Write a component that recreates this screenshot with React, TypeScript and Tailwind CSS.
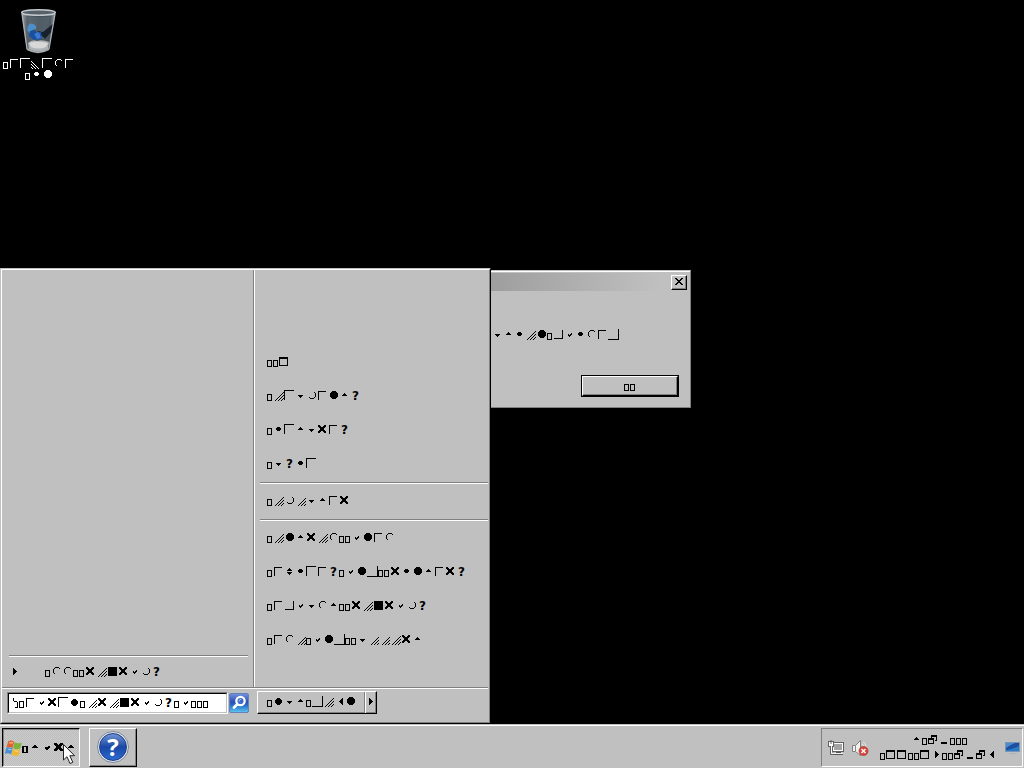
import type { ReactNode } from "react";

/* Symbol-font shapes on an 11x12 pixel grid, keyed by character. */
const SHAPES: Record<string, ReactNode> = {
  "0": <path d="M2 9h6v2h-6z" />,
  "1": <path fillRule="evenodd" d="M0 2h9v9h-9zM1 4v6h7v-6z" />,
  "2": (
    <>
      <path fillRule="evenodd" d="M0 5h6v6h-6zM1 7v3h4v-3z" />
      <path d="M3 2h6v6h-2v-1h1v-3h-4v1h-1z" />
    </>
  ),
  "3": <path d="M6 3h1v7h-1zM5 4h1v5h-1zM4 5h1v3h-1zM3 6h1v1h-1z" />,
  "4": <path d="M4 3h1v7h-1zM5 4h1v5h-1zM6 5h1v3h-1zM7 6h1v1h-1z" />,
  "5": <path d="M5 4h1v1h-1zM4 5h3v1h-3zM3 6h5v1h-5z" />,
  t: <path d="M5 4h1v1h-1zM4 5h3v1h-3zM3 6h5v1h-5z" />,
  u: <path d="M3 6h5v1h-5zM4 7h3v1h-3zM5 8h1v1h-1z" />,
  v: <path d="M5 3h1v1h-1zM4 4h3v1h-3zM3 5h5v1h-5zM3 7h5v1h-5zM4 8h3v1h-3zM5 9h1v1h-1z" />,
  w: <path d="M8 3h1v7h-1zM7 4h1v5h-1zM6 5h1v3h-1zM5 6h1v1h-1z" />,
  a: <path d="M7 5h1v1h-1zM4 6h1v1h-1zM6 6h2v1h-2zM4 7h3v1h-3zM5 8h1v1h-1z" />,
  c: <path d="M0 1h10v1h-9v9h-1z" />,
  e: <path d="M1 2h8v1h-7v8h-1z" />,
  d: <path d="M10 1h1v11h-11v-1h10z" />,
  f: <path d="M9 2h1v9h-9v-1h8z" />,
  g: <path d="M1 2h9v9h-9z" />,
  h: <path d="M4 3h3v1h1v1h1v3h-1v1h-1v1h-3v-1h-1v-1h-1v-3h1v-1h1z" />,
  i: <path d="M4 4h3v1h1v2h-1v1h-3v-1h-1v-2h1z" />,
  n: <path d="M4 2h4v1h1v1h1v4h-1v1h-1v1h-4v-1h-1v-1h-1v-4h1v-1h1z" />,
  l: <path d="M4 2h4v1h1v1h-1v-1h-4zM3 3h1v1h-1zM2 4h1v4h-1zM3 8h1v1h-1z" />,
  m: <path d="M8 3h1v1h-1zM9 4h1v4h-1zM8 8h1v1h-1zM4 9h4v1h-4zM3 8h1v1h-1z" />,
  r: (
    <path d="M1 2h2v1h-2zM7 2h2v1h-2zM1 3h3v1h-3zM6 3h3v1h-3zM2 4h6v1h-6zM3 5h4v2h-4zM2 7h6v1h-6zM1 8h3v1h-3zM6 8h3v1h-3zM1 9h2v1h-2zM7 9h2v1h-2z" />
  ),
  o: (
    <path d="M2 11h1v1h-1zM3 10h1v1h-1zM4 9h1v1h-1zM5 8h1v1h-1zM6 7h1v1h-1zM7 6h1v1h-1zM8 5h1v1h-1zM9 4h1v1h-1zM10 3h1v1h-1zM5 11h1v1h-1zM6 10h1v1h-1zM7 9h1v1h-1zM8 8h1v1h-1zM9 7h1v1h-1zM10 6h1v1h-1zM8 11h1v1h-1zM9 10h1v1h-1zM10 9h1v1h-1z" />
  ),
  p: (
    <path d="M3 11h1v1h-1zM4 10h1v1h-1zM5 9h1v1h-1zM6 8h1v1h-1zM7 7h1v1h-1zM8 6h1v1h-1zM9 5h1v1h-1zM10 4h1v1h-1zM6 11h1v1h-1zM7 10h1v1h-1zM8 9h1v1h-1zM9 8h1v1h-1zM10 7h1v1h-1zM9 11h1v1h-1zM10 10h1v1h-1z" />
  ),
  y: (
    <path d="M0 4h1v1h-1zM1 5h1v1h-1zM2 6h1v1h-1zM3 7h1v1h-1zM4 8h1v1h-1zM5 9h1v1h-1zM6 10h1v1h-1zM7 11h1v1h-1zM0 7h1v1h-1zM1 8h1v1h-1zM2 9h1v1h-1zM3 10h1v1h-1zM4 11h1v1h-1zM0 10h1v1h-1zM1 11h1v1h-1z" />
  ),
  "|": <path d="M0 2h1v3h-1zM1 5h3v1h1v6h-3v-1h2v-5h-3z" />,
};

function Glyphs({ text, bold = false }: { text: string; bold?: boolean }) {
  return (
    <span className="flex h-3 shrink-0">
      {[...text].map((ch, i) => {
        if (ch === "s")
          return (
            <span
              key={i}
              className="w-[11px] shrink-0 text-center font-['DejaVu_Sans',sans-serif] text-[12px] leading-[14px] font-bold"
            >
              ?
            </span>
          );
        const wide = ch !== "|" && ch in SHAPES;
        const w = (wide ? 11 : 6) + (bold ? 1 : 0);
        const shape = SHAPES[ch] ?? <path fillRule="evenodd" d="M0 5h5v7h-5zM1 6v5h3v-5z" />;
        return (
          <svg
            key={i}
            width={w}
            height="12"
            viewBox={`0 0 ${w} 12`}
            fill="currentColor"
            shapeRendering="crispEdges"
            className="shrink-0 overflow-visible"
          >
            {shape}
            {bold && <g transform="translate(1 0)">{shape}</g>}
          </svg>
        );
      })}
    </span>
  );
}

function MenuRow({ text }: { text: string }) {
  return (
    <div className="flex h-[34px] pt-[10px] pl-[12px]">
      <Glyphs text={text} />
    </div>
  );
}

function Separator({ className = "" }: { className?: string }) {
  return (
    <div className={className}>
      <div className="h-px bg-[#808080]" />
      <div className="h-px bg-white" />
    </div>
  );
}

function RightArrow() {
  return (
    <svg width="4" height="7" viewBox="0 0 4 7" shapeRendering="crispEdges">
      <path d="M0 0h1v7h-1zM1 1h1v5h-1zM2 2h1v3h-1zM3 3h1v1h-1z" />
    </svg>
  );
}

function RecycleBin() {
  return (
    <svg width="38" height="46" viewBox="0 0 38 46">
      <defs>
        <linearGradient id="glass" x1="0" x2="1">
          <stop offset="0" stopColor="#a4abb0" />
          <stop offset=".16" stopColor="#59626a" />
          <stop offset=".5" stopColor="#434d57" />
          <stop offset=".84" stopColor="#4a545d" />
          <stop offset="1" stopColor="#9aa0a4" />
        </linearGradient>
      </defs>
      <path d="M1.500 4 L7 42 Q18 48 29 42 L35.500 4Z" fill="url(#glass)" />
      <path d="M8 9 L30 9 L27 31 L10 32Z" fill="#64727e" opacity=".4" />
      <path d="M34 15 L23 24 L17 23 L25 31 L31 24Z" fill="#17212b" />
      <path d="M7 22 Q8 14 13 16 Q17 17 16 21 L12 22 L11 27Z" fill="#4d8fc9" />
      <path d="M10 23 L15 22 L17 26 L21 23 L22 31 L14 32 L9 28Z" fill="#194f9f" />
      <path d="M14 26 L19 24 L21 30 L17 31Z" fill="#3978d5" />
      <path d="M8 35 Q12 31 17 33 Q22 31 29 34 L28 41 Q18 46 9 41Z" fill="#b0b3b5" />
      <path d="M9 35 Q16 32 28 35 L26 39 Q18 42 11 39Z" fill="#d8d8d8" />
      <ellipse cx="18.500" cy="4.500" rx="16.800" ry="2.800" fill="#56616a" stroke="#c2c8cc" strokeWidth="1.500" />
      <path d="M2 6 L7 41 M35 6 L29 41" stroke="#a9b0b4" strokeWidth="1.300" fill="none" />
      <path d="M7 41 Q18 47.500 29 41" stroke="#a6abae" strokeWidth="2" fill="none" />
    </svg>
  );
}

function Flag() {
  return (
    <svg width="17" height="17" viewBox="0 0 16 16" className="-mr-px">
      <path d="M3.200 1 Q6 -.2 8.600 1.800 L7.300 7.500 Q4.500 5.800 1.300 7Z" fill="#e2622e" />
      <path d="M9 2 Q12 3.800 15.800 2.500 L14.400 8 Q11 9.400 7.700 7.700Z" fill="#7fb23b" />
      <path d="M1.200 7.300 Q4.300 6.200 7.200 8 L5.800 13.500 Q2.800 11.800 -.2 13Z" fill="#4a8fd0" />
      <path d="M7.600 8.200 Q10.500 9.900 14.200 8.600 L12.800 14.300 Q9.500 15.500 6.200 13.800Z" fill="#f0b62e" />
      <path d="M4 3 Q6 2 7.500 3" stroke="#f9b98c" fill="none" />
      <path d="M3 9 Q5 8.500 6 9.300" stroke="#a0cbea" fill="none" />
      <path d="M9 10 Q11 11 12.500 10.500" stroke="#fbe28d" fill="none" />
    </svg>
  );
}

function HelpIcon() {
  return (
    <div className="flex size-8 items-center justify-center rounded-full border border-[#7c8797] bg-[#e2e5eb]">
      <div className="flex size-7 items-center justify-center rounded-full border border-[#183c86] bg-linear-to-b from-[#7294d2] via-[#1a47a6] to-[#2c6bd0] font-['Open_Sans',sans-serif] text-[24px] leading-[26px] font-bold text-white">
        ?
      </div>
    </div>
  );
}

function SearchIcon() {
  return (
    <svg width="20" height="20" viewBox="0 0 20 20" className="ml-px">
      <defs>
        <linearGradient id="find" x1="0" y1="0" x2="0" y2="1">
          <stop offset="0" stopColor="#7494dd" />
          <stop offset=".45" stopColor="#2a4eb5" />
          <stop offset=".65" stopColor="#2874cc" />
          <stop offset="1" stopColor="#62c8f0" />
        </linearGradient>
      </defs>
      <rect x=".5" y=".5" width="19" height="19" rx="1.500" fill="url(#find)" stroke="#6482b8" />
      <circle cx="11.500" cy="8" r="4.200" fill="#3f6cc8" stroke="#fff" strokeWidth="2.200" />
      <path d="M10 8.500 Q10 6.500 12 6.300" stroke="#a9c4f2" fill="none" />
      <path d="M8 11.500 L5 14.500" stroke="#fff" strokeWidth="2.800" strokeLinecap="round" />
    </svg>
  );
}

function NetworkIcon() {
  return (
    <svg width="17" height="17" viewBox="0 0 17 17">
      <rect x="4.500" y="2.500" width="11" height="9" fill="#a8a8a8" stroke="#606060" />
      <rect x="5.500" y="3.500" width="9" height="7" fill="#a4a4a4" stroke="#fff" />
      <path d="M8 12.500h5M6 14.500h9" stroke="#555" />
      <path d="M6 13.500h9" stroke="#f4f4f4" />
      <rect x=".5" y="1.500" width="5" height="5" fill="#fff" stroke="#606060" />
      <path d="M3 0v4" stroke="#606060" />
      <path d="M2.500 7v7.500h4M4.500 7v5.500" stroke="#606060" fill="none" />
      <path d="M3.500 6v7.500h2" stroke="#fff" fill="none" />
    </svg>
  );
}

function VolumeIcon() {
  return (
    <svg width="17" height="17" viewBox="0 0 17 17">
      <path d="M.5 5.500h3l5-5v15l-5-4h-3z" fill="#f0f0f0" stroke="#808080" />
      <path d="M3.500 5.500v6" stroke="#888" />
      <path d="M10 4q2 1 2 3M11 2q3 1 3 5" stroke="#e4e4e4" fill="none" />
      <circle cx="11.500" cy="11" r="4.500" fill="#d84439" stroke="#a83731" strokeWidth=".7" />
      <path d="M9.500 9l4 4M13.500 9l-4 4" stroke="#fff" strokeWidth="1.500" />
    </svg>
  );
}

function DesktopIcon() {
  return (
    <svg width="15" height="13" viewBox="0 0 15 13">
      <path d="M0 0h15v10h-15z" fill="#7895b6" />
      <path d="M1 1h13v8h-13z" fill="#1c4f9e" />
      <path d="M1 1h9q-5 2-9 5z" fill="#4b8bd0" />
      <path d="M1 8q7-1 13-4v5h-13z" fill="#297bc5" />
      <path d="M4 11h8v1h-8z" fill="#a8b3bf" />
    </svg>
  );
}

function Dialog() {
  return (
    <div className="absolute top-[270px] left-[400px] flex h-[138px] w-[291px] flex-col border border-[#c0c0c0] border-r-[#808080] border-b-[#808080] bg-[#c0c0c0]">
      <div className="flex h-full flex-col border-t border-l border-white px-px pt-px">
        <div className="flex h-[18px] justify-end bg-linear-to-r from-[#989898] from-20% to-[#c0c0c0] to-90% pt-[2px] pr-[2px]">
          <div className="flex h-[15px] w-4 justify-center border border-t-white border-r-black border-b-black border-l-white bg-[#c0c0c0] pt-[2px] shadow-[inset_-1px_-1px_#808080]">
            <svg width="8" height="7" viewBox="0 0 8 7" shapeRendering="crispEdges">
              <path d="M0 0h2v1h-2zM6 0h2v1h-2zM1 1h2v1h-2zM5 1h2v1h-2zM2 2h4v1h-4zM3 3h2v1h-2zM2 4h4v1h-4zM1 5h2v1h-2zM5 5h2v1h-2zM0 6h2v1h-2zM6 6h2v1h-2z" />
            </svg>
          </div>
        </div>
        <div className="flex grow flex-col items-end pt-[37px] pr-[10px]">
          <div className="mr-[60px]">
            <Glyphs text="ution failed" />
          </div>
          <div className="mt-[35px] flex h-[22px] w-[98px] justify-center border border-black">
            <div className="flex w-full justify-center border border-t-white border-r-black border-b-black border-l-white pt-[2px] shadow-[inset_-1px_-1px_#808080]">
              <Glyphs text="OK" />
            </div>
          </div>
        </div>
      </div>
    </div>
  );
}

function StartMenu() {
  return (
    <div className="absolute top-[268px] left-0 flex h-[456px] w-[491px] flex-col border border-t-[#c0c0c0] border-r-black border-b-black border-l-[#c0c0c0] bg-[#c0c0c0]">
      <div className="flex h-full flex-col border border-t-white border-r-[#808080] border-b-[#808080] border-l-white">
        <div className="flex h-[417px]">
          <div className="flex w-[251px] flex-col justify-end">
            <Separator className="mr-[5px] ml-[7px]" />
            <div className="flex h-[30px] items-start pt-[8px] pl-[11px]">
              <div className="mt-[3px] mr-[28px] flex">
                <RightArrow />
              </div>
              <Glyphs text="All Programs" />
            </div>
          </div>
          <div className="w-px bg-[#808080]" />
          <div className="w-px bg-white" />
          <div className="grow pt-[75px]">
            <MenuRow text="VM1" />
            <MenuRow text="Documents" />
            <MenuRow text="Pictures" />
            <MenuRow text="Music" />
            <Separator className="mt-px mr-px ml-[5px]" />
            <MenuRow text="Computer" />
            <Separator className="mt-px mr-px ml-[5px]" />
            <MenuRow text="Control Panel" />
            <MenuRow text="Devices and Printers" />
            <MenuRow text="Default Programs" />
            <MenuRow text="Help and Support" />
          </div>
        </div>
        <Separator className="mr-px" />
        <div className="flex pt-[2px] pl-[5px]">
          <div className="mt-px flex h-[22px] w-[221px] border border-t-[#808080] border-r-white border-b-white border-l-[#808080]">
            <div className="flex w-full border border-t-black border-r-[#c0c0c0] border-b-[#c0c0c0] border-l-black bg-white pt-[2px] pl-[4px]">
              <Glyphs text="|Search programs a..." />
            </div>
          </div>
          <div className="mt-px pt-px">
            <SearchIcon />
          </div>
          <div className="ml-[8px] flex h-[23px] border border-t-white border-r-black border-b-black border-l-white">
            <div className="flex w-[107px] border-r border-[#808080] pt-[3px] pl-[9px] shadow-[inset_0_-1px_#808080]">
              <Glyphs text="Shut down" />
            </div>
            <div className="flex w-[11px] border-l border-white pt-[6px] pl-[3px] shadow-[inset_-1px_-1px_#808080]">
              <RightArrow />
            </div>
          </div>
        </div>
      </div>
    </div>
  );
}

function Taskbar() {
  return (
    <div className="flex h-[44px] border-t border-[#c0c0c0] bg-[#c0c0c0]">
      <div className="flex w-full border-t border-white pt-[2px] pl-[2px]">
        <div className="flex h-[39px] w-[78px] border border-t-black border-r-white border-b-white border-l-black bg-[#c4c4c4] bg-[repeating-conic-gradient(#cccccc_0_25%,#bcbcbc_0_50%)] bg-size-[2px_2px] pt-[11px] pl-[2px] shadow-[inset_1px_1px_#808080]">
          <Flag />
          <div className="pt-[1px] pl-[1px]">
            <Glyphs text="Start" bold />
          </div>
        </div>
        <div className="ml-[9px] flex h-[39px] w-[48px] justify-center border border-t-white border-r-black border-b-black border-l-white pt-[2px] shadow-[inset_-1px_-1px_#808080]">
          <HelpIcon />
        </div>
        <div className="mr-px ml-auto flex h-[39px] w-[202px] border border-t-[#808080] border-r-white border-b-white border-l-[#808080]">
          <div className="flex w-[52px] gap-[7px] pt-[11px] pl-[6px]">
            <NetworkIcon />
            <VolumeIcon />
          </div>
          <div className="flex w-[131px] flex-col items-center gap-[3px] pt-[4px]">
            <Glyphs text="5:20 PM" />
            <div className="mr-px">
              <Glyphs text=".11./14./2023" />
            </div>
          </div>
          <div className="pt-[13px]">
            <DesktopIcon />
          </div>
        </div>
      </div>
    </div>
  );
}

export default function App() {
  return (
    <div className="relative flex h-[768px] w-[1024px] flex-col overflow-hidden bg-black text-black">
      <div className="flex grow flex-col items-start pt-[8px] pl-[3px] text-white">
        <div className="flex w-[72px] flex-col items-center">
          <RecycleBin />
          <div className="mt-[3px] self-start">
            <Glyphs text="Recycle" />
          </div>
          <div className="-mt-px">
            <Glyphs text="Bin" />
          </div>
        </div>
      </div>
      <Dialog />
      <StartMenu />
      <Taskbar />
      <svg width="14" height="22" viewBox="0 0 14 22" className="absolute top-[743px] left-[62px]">
        <path d="M1.500 1.500v15.500l3.500-3.300 3 6.800 2.800-1.200-3-6.600h4.700z" fill="#fff" stroke="#222" />
      </svg>
    </div>
  );
}
